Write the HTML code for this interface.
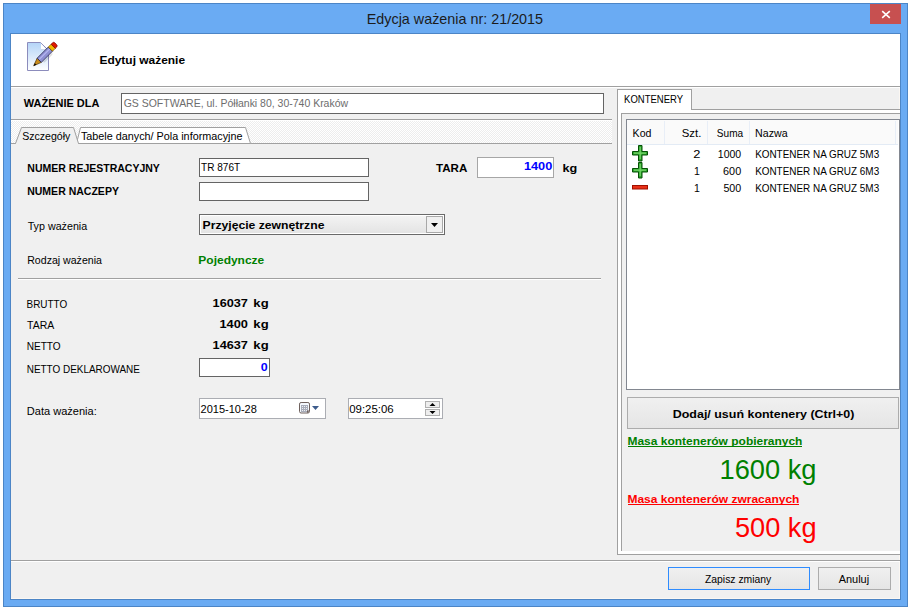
<!DOCTYPE html><html><head><meta charset="utf-8"><style>html,body{margin:0;padding:0;background:#fff;width:911px;height:610px;overflow:hidden}</style></head><body><svg width="911" height="610" viewBox="0 0 911 610" style="display:block" font-family='"Liberation Sans", sans-serif'><defs>
<pattern id="chk" x="0" y="0" width="2" height="2" patternUnits="userSpaceOnUse"><rect width="2" height="2" fill="#ffffff"/><rect x="1" y="0" width="1" height="1" fill="#ededed"/><rect x="0" y="1" width="1" height="1" fill="#ededed"/></pattern>
<linearGradient id="bg" x1="0" y1="0" x2="0" y2="1"><stop offset="0" stop-color="#f0f0f0"/><stop offset="1" stop-color="#e5e5e5"/></linearGradient>
<linearGradient id="cg" x1="0" y1="0" x2="0" y2="1"><stop offset="0" stop-color="#f3f3f3"/><stop offset="1" stop-color="#e4e4e4"/></linearGradient>
<linearGradient id="dg" x1="0" y1="0" x2="0" y2="1"><stop offset="0" stop-color="#b4d4f8"/><stop offset="1" stop-color="#ffffff"/></linearGradient>
<linearGradient id="pg" x1="0" y1="0" x2="0" y2="1"><stop offset="0" stop-color="#7ad86a"/><stop offset="1" stop-color="#1f9a1f"/></linearGradient>
</defs><rect x="0" y="0" width="911" height="610" fill="#ffffff"/><rect x="3" y="3" width="905" height="604" fill="#4c85c6"/><rect x="4" y="4" width="903" height="602" fill="#6aabf3"/><rect x="10" y="33" width="891" height="567" fill="#4c85c6"/><rect x="11" y="34" width="889" height="565" fill="#f0f0f0"/><rect x="11" y="598" width="889" height="1" fill="#fbf7f2"/><rect x="899" y="34" width="1" height="565" fill="#fbf7f2"/><rect x="870" y="4" width="31" height="20" fill="#c75050"/><path d="M882.2 11.2 L889.8 17.8 M889.8 11.2 L882.2 17.8" stroke="#fff" stroke-width="1.6" fill="none"/><rect x="11" y="34" width="889" height="52" fill="#ffffff"/><rect x="11" y="86" width="889" height="1" fill="#a0a0a0"/><rect x="11" y="87" width="889" height="1" fill="#ffffff"/><rect x="121" y="93" width="483" height="21" fill="#646464"/><rect x="122" y="94" width="481" height="19" fill="#ffffff"/><rect x="11" y="119" width="601" height="1" fill="#a0a0a0"/><rect x="11" y="120" width="601" height="1" fill="#ffffff"/><rect x="11" y="121" width="601" height="22" fill="url(#chk)"/><rect x="11" y="143" width="601" height="1" fill="#a0a0a0"/><path d="M76.5 143.5 L80.5 127.5 L245.5 127.5 L250.5 143.5 Z" fill="#ffffff" stroke="#a0a0a0" stroke-width="1"/><path d="M15.5 143.5 L21.5 127.5 L73.5 127.5 L78.5 143.5" fill="#f0f0f0" stroke="#a0a0a0" stroke-width="1"/><rect x="16" y="143" width="62" height="1" fill="#f0f0f0"/><g>
 <path d="M27.5 42.5 H40.5 L48.5 50.5 V70.5 H27.5 Z" fill="url(#dg)" stroke="#8c8cbc" stroke-width="1"/>
 <path d="M41 43.5 L41 49.6 L46.5 49.6 Z" fill="#ffffff"/>
 <path d="M41 49.6 L47 49.6" stroke="#c8d4ec" stroke-width="1"/>
 <path d="M42.50 61.88 L52.40 51.98 L52.40 54.80 L44.62 62.58 Z" fill="#000" opacity="0.12"/>
 <path d="M33.70 65.80 L37.13 58.20 L41.30 62.37 Z" fill="#c98c1c" stroke="#4a3000" stroke-width="0.7"/>
 <path d="M33.70 65.80 L34.83 63.25 L36.25 64.67 Z" fill="#000"/>
 <path d="M37.13 58.20 L48.30 47.03 L52.47 51.20 L41.30 62.37 Z" fill="#8e90d2" stroke="#20204a" stroke-width="0.8"/>
 <path d="M39.29 59.37 L49.54 49.11" stroke="#b4b6f0" stroke-width="1.3"/>
 <path d="M48.30 47.03 L51.13 44.20 L55.30 48.37 L52.47 51.20 Z" fill="#f2b800" stroke="#6a4800" stroke-width="0.7"/>
 <path d="M51.13 44.20 L52.54 42.78 Q53.68 41.65 55.05 43.03 L56.47 44.45 Q57.85 45.82 56.72 46.96 L55.30 48.37 Z" fill="#e01800" stroke="#7a0000" stroke-width="0.7"/>
</g><rect x="199" y="158" width="170" height="19" fill="#646464"/><rect x="200" y="159" width="168" height="17" fill="#ffffff"/><rect x="199" y="182" width="170" height="19" fill="#646464"/><rect x="200" y="183" width="168" height="17" fill="#ffffff"/><rect x="477" y="157" width="77" height="21" fill="#a6a6a6"/><rect x="478" y="158" width="75" height="19" fill="#ffffff"/><rect x="199" y="214" width="246" height="21" fill="#6a6a6a"/><rect x="200" y="215" width="244" height="19" fill="#ffffff"/><rect x="201" y="216" width="242" height="17" fill="url(#cg)"/><rect x="426" y="216" width="17" height="17" fill="#a8a8a8"/><rect x="427" y="217" width="15" height="15" fill="#f0f0f0"/><path d="M431 223 L438 223 L434.5 227 Z" fill="#000"/><rect x="18" y="278" width="583" height="1" fill="#a0a0a0"/><rect x="18" y="279" width="583" height="1" fill="#ffffff"/><rect x="199" y="358" width="71" height="19" fill="#646464"/><rect x="200" y="359" width="69" height="17" fill="#ffffff"/><rect x="199" y="398" width="127" height="21" fill="#abadb3"/><rect x="200" y="399" width="125" height="19" fill="#ffffff"/><rect x="299.5" y="402.5" width="10" height="10.5" rx="1.6" fill="#f4f8fe" stroke="#6e605c" stroke-width="1"/><rect x="301" y="405" width="7" height="7" fill="#a8adba"/><rect x="302" y="406" width="1" height="1" fill="#f0f0f4"/><rect x="302" y="408" width="1" height="1" fill="#f0f0f4"/><rect x="302" y="410" width="1" height="1" fill="#f0f0f4"/><rect x="304" y="406" width="1" height="1" fill="#f0f0f4"/><rect x="304" y="408" width="1" height="1" fill="#f0f0f4"/><rect x="304" y="410" width="1" height="1" fill="#f0f0f4"/><rect x="306" y="406" width="1" height="1" fill="#f0f0f4"/><rect x="306" y="408" width="1" height="1" fill="#f0f0f4"/><rect x="306" y="410" width="1" height="1" fill="#f0f0f4"/><path d="M307 413.2 L309.8 410.4 L307 410.4 Z" fill="#6e605c"/><path d="M312 406 L319 406 L315.5 410 Z" fill="#3d5c8c"/><rect x="348" y="398" width="95" height="21" fill="#abadb3"/><rect x="349" y="399" width="93" height="19" fill="#ffffff"/><rect x="425" y="401" width="15" height="7" fill="#b0b0b0"/><rect x="426" y="402" width="13" height="5" fill="#eeeeee"/><rect x="425" y="409" width="15" height="7" fill="#b0b0b0"/><rect x="426" y="410" width="13" height="5" fill="#eeeeee"/><path d="M429.5 406 L435.5 406 L432.5 403 Z" fill="#000"/><path d="M429.5 411 L435.5 411 L432.5 414 Z" fill="#000"/><rect x="617" y="109" width="283" height="446" fill="#a0a0a0"/><rect x="618" y="110" width="282" height="444" fill="#ffffff"/><rect x="617" y="89" width="75" height="21" fill="#a0a0a0"/><rect x="618" y="90" width="73" height="21" fill="#ffffff"/><rect x="621" y="113" width="279" height="438" fill="#a0a0a0"/><rect x="622" y="114" width="278" height="437" fill="#f0f0f0"/><rect x="626" y="119" width="274" height="271" fill="#828790"/><rect x="627" y="120" width="272" height="269" fill="#ffffff"/><rect x="627" y="120" width="271" height="24" fill="#fafafa"/><rect x="627" y="144" width="271" height="1" fill="#e3ebf5"/><rect x="664" y="121" width="1" height="23" fill="#e8eef7"/><rect x="707" y="121" width="1" height="23" fill="#e8eef7"/><rect x="749" y="121" width="1" height="23" fill="#e8eef7"/><rect x="895" y="121" width="1" height="23" fill="#e8eef7"/><path d="M638.5 145.5 h3.5 v6 h5.5 v3.5 h-5.5 v6 h-3.5 v-6 h-6 v-3.5 h6 Z" fill="#2ea52e" stroke="#045004" stroke-width="1"/><path d="M640.2 147 V159 M634 153.2 H646" stroke="#8ae47a" stroke-width="1.2" opacity="0.8"/><path d="M638.5 162.5 h3.5 v6 h5.5 v3.5 h-5.5 v6 h-3.5 v-6 h-6 v-3.5 h6 Z" fill="#2ea52e" stroke="#045004" stroke-width="1"/><path d="M640.2 164 V176 M634 170.2 H646" stroke="#8ae47a" stroke-width="1.2" opacity="0.8"/><rect x="632.5" y="185.5" width="15" height="3.5" fill="#e83018" stroke="#a01000" stroke-width="1"/><rect x="628" y="446" width="174" height="1" fill="#008000"/><rect x="628" y="504" width="171" height="1" fill="#ff0000"/><rect x="627" y="397" width="272" height="32" fill="#acacac"/><rect x="628" y="398" width="270" height="30" fill="url(#bg)"/><rect x="11" y="560" width="889" height="1" fill="#a0a0a0"/><rect x="11" y="561" width="889" height="1" fill="#ffffff"/><rect x="668" y="567" width="142" height="23" fill="#2e8cff"/><rect x="669" y="568" width="140" height="21" fill="url(#bg)"/><rect x="818" y="567" width="73" height="23" fill="#acacac"/><rect x="819" y="568" width="71" height="21" fill="url(#bg)"/><text x="366.75" y="23.8" font-size="15" font-weight="normal" fill="#1c1c1c" textLength="176.33" lengthAdjust="spacingAndGlyphs">Edycja ważenia nr: 21/2015</text><text x="99.47" y="63.7" font-size="11" font-weight="bold" fill="#000" textLength="85.59" lengthAdjust="spacingAndGlyphs">Edytuj ważenie</text><text x="23.86" y="107.0" font-size="11" font-weight="bold" fill="#000" textLength="75.53" lengthAdjust="spacingAndGlyphs">WAŻENIE DLA</text><text x="123.63" y="107.0" font-size="11" font-weight="normal" fill="#6d6d6d" textLength="224.47" lengthAdjust="spacingAndGlyphs">GS SOFTWARE, ul. Półłanki 80, 30-740 Kraków</text><text x="22.18" y="139.7" font-size="11" font-weight="normal" fill="#000" textLength="48.13" lengthAdjust="spacingAndGlyphs">Szczegóły</text><text x="80.93" y="139.7" font-size="11" font-weight="normal" fill="#000" textLength="161.54" lengthAdjust="spacingAndGlyphs">Tabele danych/ Pola informacyjne</text><text x="624.10" y="103.0" font-size="11" font-weight="normal" fill="#000" textLength="59.00" lengthAdjust="spacingAndGlyphs">KONTENERY</text><text x="632.59" y="137.0" font-size="11" font-weight="normal" fill="#000" textLength="18.82" lengthAdjust="spacingAndGlyphs">Kod</text><text x="681.72" y="137.0" font-size="11" font-weight="normal" fill="#000" textLength="19.61" lengthAdjust="spacingAndGlyphs">Szt.</text><text x="716.84" y="137.0" font-size="11" font-weight="normal" fill="#000" textLength="26.29" lengthAdjust="spacingAndGlyphs">Suma</text><text x="755.08" y="137.0" font-size="11" font-weight="normal" fill="#000" textLength="32.54" lengthAdjust="spacingAndGlyphs">Nazwa</text><text x="693.36" y="158.0" font-size="11" font-weight="normal" fill="#000" textLength="7.14" lengthAdjust="spacingAndGlyphs">2</text><text x="717.83" y="158.0" font-size="11" font-weight="normal" fill="#000" textLength="23.33" lengthAdjust="spacingAndGlyphs">1000</text><text x="755.13" y="158.0" font-size="11" font-weight="normal" fill="#000" textLength="124.03" lengthAdjust="spacingAndGlyphs">KONTENER NA GRUZ 5M3</text><text x="694.10" y="175.0" font-size="11" font-weight="normal" fill="#000" textLength="5.87" lengthAdjust="spacingAndGlyphs">1</text><text x="723.10" y="175.0" font-size="11" font-weight="normal" fill="#000" textLength="18.07" lengthAdjust="spacingAndGlyphs">600</text><text x="755.13" y="175.0" font-size="11" font-weight="normal" fill="#000" textLength="124.03" lengthAdjust="spacingAndGlyphs">KONTENER NA GRUZ 6M3</text><text x="694.10" y="192.0" font-size="11" font-weight="normal" fill="#000" textLength="5.87" lengthAdjust="spacingAndGlyphs">1</text><text x="723.41" y="192.0" font-size="11" font-weight="normal" fill="#000" textLength="17.83" lengthAdjust="spacingAndGlyphs">500</text><text x="755.13" y="192.0" font-size="11" font-weight="normal" fill="#000" textLength="124.03" lengthAdjust="spacingAndGlyphs">KONTENER NA GRUZ 5M3</text><text x="27.35" y="172.0" font-size="11" font-weight="bold" fill="#000" textLength="132.54" lengthAdjust="spacingAndGlyphs">NUMER REJESTRACYJNY</text><text x="27.16" y="195.0" font-size="11" font-weight="bold" fill="#000" textLength="91.77" lengthAdjust="spacingAndGlyphs">NUMER NACZEPY</text><text x="201.09" y="171.0" font-size="11" font-weight="normal" fill="#000" textLength="39.07" lengthAdjust="spacingAndGlyphs">TR 876T</text><text x="436.02" y="172.0" font-size="11" font-weight="bold" fill="#000" textLength="31.30" lengthAdjust="spacingAndGlyphs">TARA</text><text x="523.91" y="170.0" font-size="11" font-weight="bold" fill="#0000ff" textLength="28.33" lengthAdjust="spacingAndGlyphs">1400</text><text x="562.55" y="172.0" font-size="11" font-weight="bold" fill="#000" textLength="14.72" lengthAdjust="spacingAndGlyphs">kg</text><text x="27.66" y="230.1" font-size="11" font-weight="normal" fill="#000" textLength="59.54" lengthAdjust="spacingAndGlyphs">Typ ważenia</text><text x="202.54" y="228.7" font-size="11" font-weight="bold" fill="#000" textLength="121.90" lengthAdjust="spacingAndGlyphs">Przyjęcie zewnętrzne</text><text x="27.24" y="263.9" font-size="11" font-weight="normal" fill="#000" textLength="74.68" lengthAdjust="spacingAndGlyphs">Rodzaj ważenia</text><text x="198.39" y="263.9" font-size="11" font-weight="bold" fill="#008000" textLength="65.86" lengthAdjust="spacingAndGlyphs">Pojedyncze</text><text x="26.56" y="308.3" font-size="11" font-weight="normal" fill="#000" textLength="40.68" lengthAdjust="spacingAndGlyphs">BRUTTO</text><text x="27.09" y="329.0" font-size="11" font-weight="normal" fill="#000" textLength="27.19" lengthAdjust="spacingAndGlyphs">TARA</text><text x="26.65" y="350.0" font-size="11" font-weight="normal" fill="#000" textLength="33.94" lengthAdjust="spacingAndGlyphs">NETTO</text><text x="26.71" y="373.2" font-size="11" font-weight="normal" fill="#000" textLength="113.22" lengthAdjust="spacingAndGlyphs">NETTO DEKLAROWANE</text><text x="212.57" y="307.1" font-size="11" font-weight="bold" fill="#000" textLength="35.36" lengthAdjust="spacingAndGlyphs">16037</text><text x="253.38" y="307.1" font-size="11" font-weight="bold" fill="#000" textLength="15.25" lengthAdjust="spacingAndGlyphs">kg</text><text x="219.47" y="328.0" font-size="11" font-weight="bold" fill="#000" textLength="28.47" lengthAdjust="spacingAndGlyphs">1400</text><text x="253.38" y="328.0" font-size="11" font-weight="bold" fill="#000" textLength="15.25" lengthAdjust="spacingAndGlyphs">kg</text><text x="212.57" y="348.9" font-size="11" font-weight="bold" fill="#000" textLength="35.36" lengthAdjust="spacingAndGlyphs">14637</text><text x="253.38" y="348.9" font-size="11" font-weight="bold" fill="#000" textLength="15.25" lengthAdjust="spacingAndGlyphs">kg</text><text x="260.69" y="371.0" font-size="11" font-weight="bold" fill="#0000ff" textLength="6.92" lengthAdjust="spacingAndGlyphs">0</text><text x="26.82" y="414.8" font-size="11" font-weight="normal" fill="#000" textLength="69.90" lengthAdjust="spacingAndGlyphs">Data ważenia:</text><text x="200.52" y="412.7" font-size="11" font-weight="normal" fill="#000" textLength="56.33" lengthAdjust="spacingAndGlyphs">2015-10-28</text><text x="349.22" y="412.8" font-size="11" font-weight="normal" fill="#000" textLength="44.44" lengthAdjust="spacingAndGlyphs">09:25:06</text><text x="672.77" y="418.0" font-size="11" font-weight="bold" fill="#000" textLength="181.61" lengthAdjust="spacingAndGlyphs">Dodaj/ usuń kontenery (Ctrl+0)</text><text x="627.47" y="445.1" font-size="11" font-weight="bold" fill="#008000" textLength="174.97" lengthAdjust="spacingAndGlyphs">Masa kontenerów pobieranych</text><text x="719.53" y="478.7" font-size="27" font-weight="normal" fill="#008000" textLength="96.97" lengthAdjust="spacingAndGlyphs">1600 kg</text><text x="627.47" y="503.0" font-size="11" font-weight="bold" fill="#ff0000" textLength="171.93" lengthAdjust="spacingAndGlyphs">Masa kontenerów zwracanych</text><text x="734.96" y="537.0" font-size="27" font-weight="normal" fill="#ff0000" textLength="81.61" lengthAdjust="spacingAndGlyphs">500 kg</text><text x="704.98" y="582.6" font-size="11" font-weight="normal" fill="#000" textLength="66.34" lengthAdjust="spacingAndGlyphs">Zapisz zmiany</text><text x="838.74" y="582.9" font-size="11" font-weight="normal" fill="#000" textLength="30.37" lengthAdjust="spacingAndGlyphs">Anuluj</text></svg></body></html>
